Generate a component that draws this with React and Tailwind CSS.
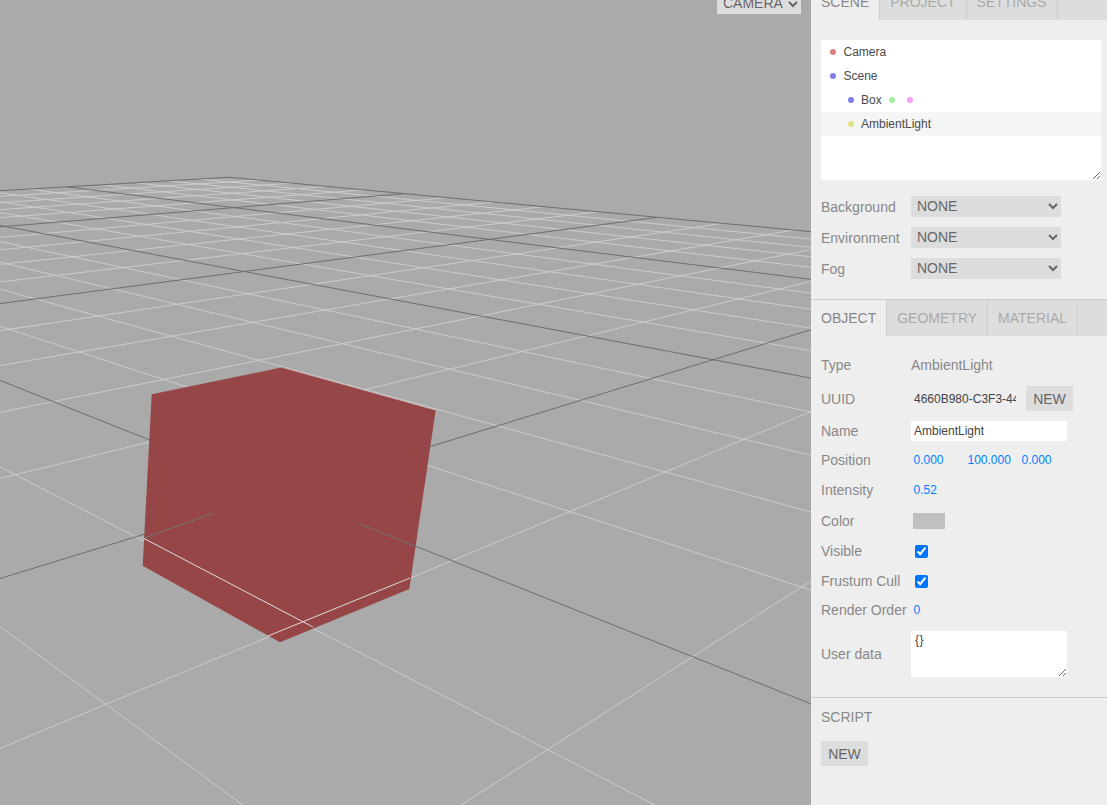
import React from "react";

const PTS = [
  [0, 0, 230, 177.3], [1, 0, 405, 193.3], [2, 0, 656.7, 216.7],
  [0, 1, 70, 187], [1, 1, 230, 207.7], [2, 1, 490, 239.3],
  [1, 2, 0, 226.7], [2, 2, 243, 271.7], [3, 2, 713, 360.7],
  [3, 3, 285, 492], [3, 3.2, 137, 535], [3.2, 3, 452, 561.7],
  [3.4, 3, 693, 659], [3.2, 3.2, 303, 621.7], [3.2, 3.4, 109, 701], [3.4, 3.2, 547, 749],
  [3.4, 3.4, 346.8, 876], [3.4, 3.4, 346.8, 876],
  [3.2, 2.8, 568.3, 512.7], [3.4, 2.8, 803, 590], [3.2, 2.6, 665, 473], [3.2, 2.4, 745, 440.7],
];

function solve(A, b) {
  const n = b.length;
  const M = A.map((r, i) => [...r, b[i]]);
  for (let i = 0; i < n; i++) {
    let p = i;
    for (let k = i + 1; k < n; k++) if (Math.abs(M[k][i]) > Math.abs(M[p][i])) p = k;
    [M[i], M[p]] = [M[p], M[i]];
    for (let k = i + 1; k < n; k++) {
      const f = M[k][i] / M[i][i];
      for (let j = i; j <= n; j++) M[k][j] -= f * M[i][j];
    }
  }
  const x = new Array(n).fill(0);
  for (let i = n - 1; i >= 0; i--) {
    let s = M[i][n];
    for (let j = i + 1; j < n; j++) s -= M[i][j] * x[j];
    x[i] = s / M[i][i];
  }
  return x;
}

function fit() {
  const rows = [];
  const rhs = [];
  for (const [u, v, x, y] of PTS) {
    rows.push([u, v, 1, 0, 0, 0, -u * x, -v * x]); rhs.push(x);
    rows.push([0, 0, 0, u, v, 1, -u * y, -v * y]); rhs.push(y);
  }
  const N = Array.from({ length: 8 }, () => new Array(8).fill(0));
  const B = new Array(8).fill(0);
  rows.forEach((r, k) => {
    for (let i = 0; i < 8; i++) {
      B[i] += r[i] * rhs[k];
      for (let j = 0; j < 8; j++) N[i][j] += r[i] * r[j];
    }
  });
  return solve(N, B);
}
const H = fit();
const wOf = (u, v) => H[6] * u + H[7] * v + 1;
const proj = (u, v) => {
  const w = wOf(u, v);
  return [(H[0] * u + H[1] * v + H[2]) / w, (H[3] * u + H[4] * v + H[5]) / w];
};

function segment(u0, v0, u1, v1) {
  const w0 = wOf(u0, v0);
  const w1 = wOf(u1, v1);
  let t = 1;
  const minW = 0.02;
  if (w1 < minW) t = (w0 - minW) / (w0 - w1);
  const a = proj(u0, v0);
  const b = proj(u0 + (u1 - u0) * t, v0 + (v1 - v0) * t);
  return [a, b];
}

const LINES = [];
for (let i = 0; i <= 30; i++) {
  const k = i / 5;
  const major = i % 5 === 0;
  LINES.push({ s: segment(k, 0, k, 6), major, key: "u" + i });
  LINES.push({ s: segment(0, k, 6, k), major, key: "v" + i });
}

const CUBE = "151.7,394.3 282.3,367.3 435.7,410 409.3,589 280,642.3 142.7,565.7";

function Scene3D() {
  return (
    <svg className="absolute inset-0 w-full h-full" viewBox="0 0 811 805">
      {LINES.filter((l) => !l.major).map((l) => (
        <line key={l.key} x1={l.s[0][0]} y1={l.s[0][1]} x2={l.s[1][0]} y2={l.s[1][1]} stroke="#cccccc" strokeWidth="1" />
      ))}
      {LINES.filter((l) => l.major).map((l) => (
        <line key={l.key} x1={l.s[0][0]} y1={l.s[0][1]} x2={l.s[1][0]} y2={l.s[1][1]} stroke="#6e6e6e" strokeWidth="1" />
      ))}
      <polygon points={CUBE} fill="#964646" />
      <line x1="282.3" y1="367.3" x2="435.7" y2="410" stroke="#c4b4b4" strokeWidth="1" />
      <line x1="143.4" y1="538.3" x2="213" y2="513.3" stroke="#767676" strokeWidth="1" />
      <line x1="360" y1="524" x2="415" y2="546" stroke="#767676" strokeWidth="1" />
      <line x1="143" y1="538" x2="313" y2="627" stroke="#dcdcdc" strokeWidth="1" />
      <line x1="268" y1="636" x2="410" y2="578" stroke="#dcdcdc" strokeWidth="1" />
    </svg>
  );
}

const Dot = ({ className }) => <span className={`inline-block w-[6px] h-[6px] rounded-full ${className}`} />;

function Tab({ active, children }) {
  return (
    <div
      className={`h-9 px-[10px] flex items-center border-r border-[#cccccc] ${active ? "bg-[#eeeeee] text-[#888888]" : "text-[#aaaaaa]"}`}
    >
      {children}
    </div>
  );
}

function TreeRow({ indent, dot, label, selected, extra }) {
  return (
    <div className={`h-6 flex items-center text-xs text-[#4a4a4a] ${indent ? "pl-[27px]" : "pl-[9px]"} ${selected ? "bg-[#f5f5f5]" : ""}`}>
      <Dot className={dot} />
      <span className={indent ? "ml-[7px]" : "ml-[7.5px]"}>{label}</span>
      {extra}
    </div>
  );
}

function SceneSelect({ label }) {
  return (
    <div className="flex items-center h-[21px]">
      <span className="w-[90px] text-[#888888]">{label}</span>
      <select className="w-[150px] h-[21px] bg-[#dddddd] text-[#666666] text-sm px-[2px] pb-[2px]">
        <option>NONE</option>
      </select>
    </div>
  );
}

const Label = ({ children }) => <span className="w-[90px] shrink-0 text-[#888888] whitespace-nowrap">{children}</span>;
const Num = ({ children, className = "" }) => <span className={`text-xs text-[#0080ff] ${className}`}>{children}</span>;

function Sidebar() {
  return (
    <aside className="w-[296px] shrink-0 -mt-4 bg-[#eeeeee] text-sm overflow-hidden">
      <div className="flex bg-[#dddddd] h-9">
        <Tab active>SCENE</Tab>
        <Tab>PROJECT</Tab>
        <Tab>SETTINGS</Tab>
      </div>
      <div className="h-[280px] px-[10px] pt-5 border-b border-[#cccccc]">
        <div className="w-[280px] h-[140px] bg-white overflow-auto resize-y">
          <TreeRow dot="bg-[#e08080]" label="Camera" />
          <TreeRow dot="bg-[#8080e4]" label="Scene" />
          <TreeRow
            indent
            dot="bg-[#8080f0]"
            label="Box"
            extra={
              <>
                <Dot className="bg-[#a0f0a0] ml-[7px]" />
                <Dot className="bg-[#f0a0f0] ml-[12px]" />
              </>
            }
          />
          <TreeRow indent selected dot="bg-[#e0e080]" label="AmbientLight" />
        </div>
        <div className="mt-4 flex flex-col gap-[10px]">
          <SceneSelect label="Background" />
          <SceneSelect label="Environment" />
          <SceneSelect label="Fog" />
        </div>
      </div>
      <div className="flex bg-[#dddddd] h-9">
        <Tab active>OBJECT</Tab>
        <Tab>GEOMETRY</Tab>
        <Tab>MATERIAL</Tab>
      </div>
      <div className="h-[362px] px-[10px] border-b border-[#cccccc] flex flex-col">
        <div className="flex items-center h-[20px] mt-[19px]">
          <Label>Type</Label>
          <span className="text-[#888888]">AmbientLight</span>
        </div>
        <div className="flex items-center h-[25px] mt-[11px]">
          <Label>UUID</Label>
          <input readOnly value="4660B980-C3F3-4435-9B6E-1F2A7C" className="w-[108px] text-xs text-[#444444] px-[3px] outline-none" />
          <button className="w-[47px] h-[25px] ml-[7px] bg-[#dddddd] text-[#666666]">NEW</button>
        </div>
        <div className="flex items-center h-[20px] mt-[10px]">
          <Label>Name</Label>
          <input readOnly value="AmbientLight" className="w-[156px] h-[20px] bg-white text-xs text-[#444444] px-[3px] outline-none" />
        </div>
        <div className="flex items-center h-[20px] mt-[9px]">
          <Label>Position</Label>
          <Num className="ml-[2.5px] w-[54px]">0.000</Num>
          <Num className="w-[54px]">100.000</Num>
          <Num>0.000</Num>
        </div>
        <div className="flex items-center h-[20px] mt-[10px]">
          <Label>Intensity</Label>
          <Num className="ml-[2.5px]">0.52</Num>
        </div>
        <div className="flex items-center h-[20px] mt-[11px]">
          <Label>Color</Label>
          <span className="ml-[2px] w-[32px] h-[16px] bg-[#c0c0c0]" />
        </div>
        <div className="flex items-center h-[20px] mt-[10px]">
          <Label>Visible</Label>
          <input type="checkbox" readOnly checked className="ml-[4px] w-[13px] h-[13px]" />
        </div>
        <div className="flex items-center h-[20px] mt-[10px]">
          <Label>Frustum Cull</Label>
          <input type="checkbox" readOnly checked className="ml-[4px] w-[13px] h-[13px]" />
        </div>
        <div className="flex items-center h-[20px] mt-[9px]">
          <Label>Render Order</Label>
          <Num className="ml-[2.5px]">0</Num>
        </div>
        <div className="flex items-center mt-[11px]">
          <Label>User data</Label>
          <textarea readOnly value="{}" className="w-[156px] h-[46px] bg-white text-xs text-[#444444] tracking-[0.5px] px-[4px] pt-[1px] outline-none" />
        </div>
      </div>
      <div className="px-[10px] pt-[9px] pb-[40px]">
        <div className="text-[#888888] h-5 flex items-center">SCRIPT</div>
        <button className="mt-[14px] w-[47px] h-[25px] bg-[#dddddd] text-[#666666]">NEW</button>
      </div>
    </aside>
  );
}

export default function App() {
  return (
    <div className="w-[1107px] h-[805px] flex overflow-hidden bg-[#aaaaaa] font-['Liberation_Sans',Arial,sans-serif]">
      <main className="relative flex-1">
        <Scene3D />
        <select className="absolute right-[10px] -top-[6px] w-[84px] h-[20px] bg-[#dddddd] text-[#666666] text-sm px-[2px] pb-[2px]">
          <option>CAMERA</option>
        </select>
      </main>
      <Sidebar />
    </div>
  );
}
